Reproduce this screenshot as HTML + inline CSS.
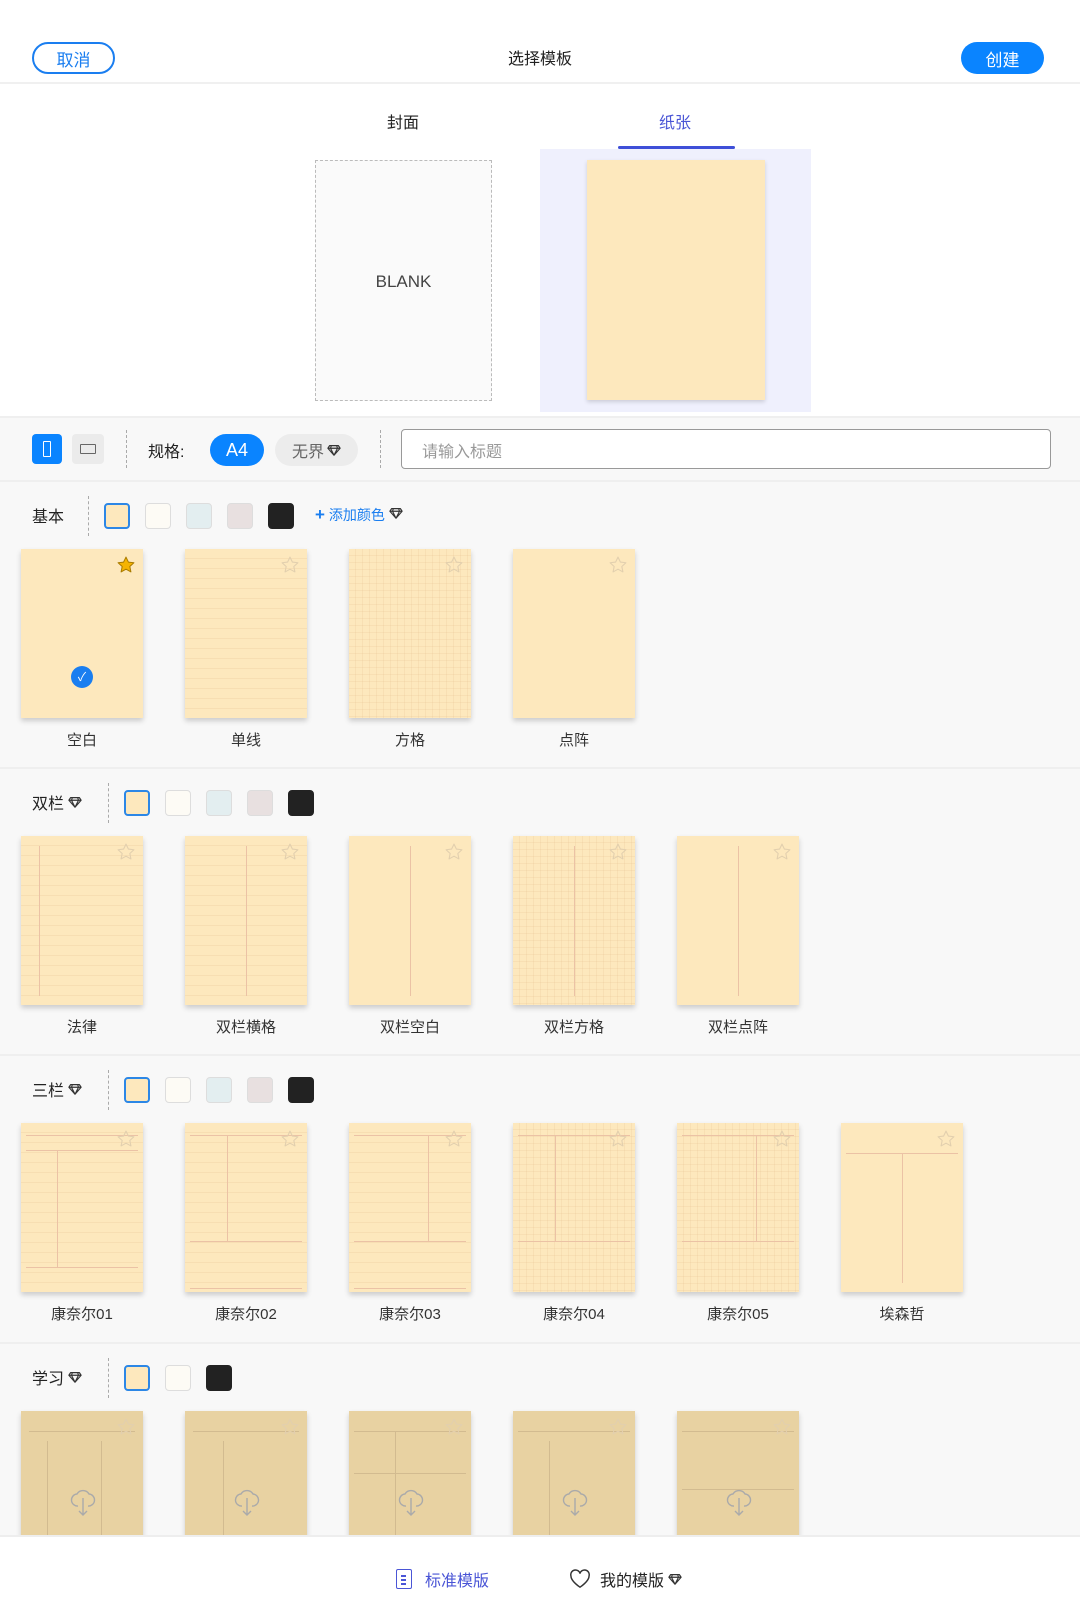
<!DOCTYPE html>
<html><head><meta charset="utf-8"><style>
*{margin:0;padding:0;box-sizing:border-box}
body{width:1080px;height:1620px;position:relative;overflow:hidden;background:#f8f8f8;font-family:"Liberation Sans","Noto Sans CJK SC",sans-serif;color:#222}
.a{position:absolute}
.top{left:0;top:0;width:1080px;height:416px;background:#fff}
.btn{height:32px;border-radius:16px;font-size:17px;display:flex;align-items:center;justify-content:center}
.tab{font-size:16px;top:109px}
.card{position:absolute;width:122px;height:169px;background:#fde8bd;box-shadow:0 3px 5px rgba(0,0,0,.18);overflow:hidden}
.star{position:absolute;right:7px;top:6px;width:20px;height:20px}
.lbl{position:absolute;width:122px;text-align:center;font-size:15px;color:#333}
.sec{position:absolute;left:32px;font-size:16px;color:#222}
.vd{position:absolute;width:0;border-left:1px dashed #aaa}
.sw{position:absolute;width:26px;height:26px;border-radius:4px;border:1px solid #ddd}
.hr{position:absolute;left:0;width:1080px;height:2px;background:#efefef}
.ln{background-image:repeating-linear-gradient(to bottom,transparent 0 9px,rgba(215,170,120,.16) 9px 10px)}
.gr{background-image:repeating-linear-gradient(to bottom,transparent 0 6px,rgba(215,170,120,.14) 6px 7px),repeating-linear-gradient(to right,transparent 0 6px,rgba(215,170,120,.14) 6px 7px)}
.vl{position:absolute;width:1px;background:#ebc2a5}
.hl{position:absolute;height:1px;background:#ebc2a5}
.st{background:#e8d2a2}
.st .vl,.st .hl{background:#d2bb90}
.cl{position:absolute;left:49px;top:73px;width:26px;height:34px}
</style></head><body>
<svg width="0" height="0" style="position:absolute"><defs><symbol id="s" viewBox="0 0 24 24"><path d="M12 2.5l2.9 6 6.6.8-4.9 4.5 1.3 6.5L12 17l-5.9 3.3 1.3-6.5L2.5 9.3l6.6-.8z" fill="none" stroke="#e2cfae" stroke-width="1.3" stroke-linejoin="round"/></symbol>
<symbol id="d" viewBox="0 0 16 16"><path d="M3 3h10l2 3-7 8-7-8z M1 6h14 M5 3l-1 3 4 8 4-8-1-3" fill="none" stroke="#333" stroke-width="1.3" stroke-linejoin="round"/></symbol>
<symbol id="c" viewBox="0 0 26 34"><path d="M8 22a6 6 0 0 1-1-12 7 7 0 0 1 12 0 6 6 0 0 1-1 12 M13 14v17 M9 27l4 4 4-4" fill="none" stroke="#aaa" stroke-width="1.4"/></symbol></defs></svg>

<div class="a top"></div>
<div class="a btn" style="left:32px;top:42px;width:83px;border:2px solid #1a7ef0;color:#1a7ef0">取消</div>
<div class="a" style="left:0;width:1080px;top:45px;text-align:center;font-size:16px">选择模板</div>
<div class="a btn" style="left:961px;top:42px;width:83px;background:#0a84ff;color:#fff">创建</div>
<div class="a" style="left:0;top:82px;width:1080px;height:2px;background:#f0f0f0"></div>

<div class="a tab" style="left:387px">封面</div>
<div class="a tab" style="left:659px;color:#4a55d6">纸张</div>
<div class="a" style="left:618px;top:146px;width:117px;height:3px;background:#3e4fd8;border-radius:2px"></div>

<div class="a" style="left:315px;top:160px;width:177px;height:241px;border:1px dashed #bbb;background:#fafafa"></div>
<div class="a" style="left:315px;top:272px;width:177px;text-align:center;font-size:17px;color:#444">BLANK</div>
<div class="a" style="left:540px;top:149px;width:271px;height:263px;background:#eff0fd"></div>
<div class="a" style="left:587px;top:160px;width:178px;height:240px;background:#fde8bd;box-shadow:0 2px 4px rgba(0,0,0,.15)"></div>

<div class="a" style="left:0;top:416px;width:1080px;height:66px;background:#f8f8f8;border-top:2px solid #efefef;border-bottom:2px solid #efefef"></div>
<div class="a" style="left:32px;top:434px;width:30px;height:30px;background:#0a84ff;border-radius:4px"><div class="a" style="left:11px;top:7px;width:8px;height:16px;border:1.5px solid #fff;border-radius:1px"></div></div>
<div class="a" style="left:72px;top:434px;width:32px;height:30px;background:#ebebeb;border-radius:4px"><div class="a" style="left:8px;top:10px;width:16px;height:10px;border:1.5px solid #666;border-radius:1px"></div></div>
<div class="vd" style="left:126px;top:430px;height:38px"></div>
<div class="a" style="left:148px;top:438px;font-size:16px">规格:</div>
<div class="a btn" style="left:210px;top:434px;width:54px;background:#0a84ff;color:#fff;font-size:18px">A4</div>
<div class="a btn" style="left:275px;top:434px;width:83px;background:#ececec;color:#666;font-size:16px">无界<svg width="14" height="14" style="margin-left:3px"><use href="#d"/></svg></div>
<div class="vd" style="left:380px;top:430px;height:38px"></div>
<div class="a" style="left:401px;top:429px;width:650px;height:40px;border:1.5px solid #999;border-radius:4px;background:#fff;font-size:16px;color:#999;padding:8px 20px">请输入标题</div>

<div class="sec" style="top:503px">基本</div>
<div class="vd" style="left:88px;top:496px;height:40px"></div>
<div class="sw" style="left:104px;top:503px;background:#fde8bd;border:2px solid #2c87e6"></div>
<div class="sw" style="left:145px;top:503px;background:#fdfbf5"></div>
<div class="sw" style="left:186px;top:503px;background:#e3eef0"></div>
<div class="sw" style="left:227px;top:503px;background:#e8e0e0"></div>
<div class="sw" style="left:268px;top:503px;background:#222;border-color:#222"></div>
<div class="a" style="left:315px;top:505px;font-size:14px;color:#1a7ef0"><b style="font-size:17px">+</b> 添加颜色 <svg width="14" height="14"><use href="#d"/></svg></div>

<div class="card" style="left:21px;top:549px"><svg class="star" viewBox="0 0 24 24"><path d="M12 2.5l2.9 6 6.6.8-4.9 4.5 1.3 6.5L12 17l-5.9 3.3 1.3-6.5L2.5 9.3l6.6-.8z" fill="#f5b301" stroke="#a87a00" stroke-width="1.2" stroke-linejoin="round"/></svg>
<div class="a" style="left:50px;top:117px;width:22px;height:22px;border-radius:50%;background:#1a7ef0;color:#fff;font-size:12px;text-align:center;line-height:22px">✓</div></div>
<div class="card ln" style="left:185px;top:549px"><svg class="star"><use href="#s"/></svg></div>
<div class="card gr" style="left:349px;top:549px"><svg class="star"><use href="#s"/></svg></div>
<div class="card" style="left:513px;top:549px"><svg class="star"><use href="#s"/></svg></div>
<div class="lbl" style="left:21px;top:729px">空白</div>
<div class="lbl" style="left:185px;top:729px">单线</div>
<div class="lbl" style="left:349px;top:729px">方格</div>
<div class="lbl" style="left:513px;top:729px">点阵</div>
<div class="hr" style="top:767px"></div>

<div class="sec" style="top:790px">双栏 <svg width="14" height="14"><use href="#d"/></svg></div>
<div class="vd" style="left:108px;top:783px;height:40px"></div>
<div class="sw" style="left:124px;top:790px;background:#fde8bd;border:2px solid #2c87e6"></div>
<div class="sw" style="left:165px;top:790px;background:#fdfbf5"></div>
<div class="sw" style="left:206px;top:790px;background:#e3eef0"></div>
<div class="sw" style="left:247px;top:790px;background:#e8e0e0"></div>
<div class="sw" style="left:288px;top:790px;background:#222;border-color:#222"></div>

<div class="card ln" style="left:21px;top:836px"><div class="vl" style="left:18px;top:10px;height:150px"></div><svg class="star"><use href="#s"/></svg></div>
<div class="card ln" style="left:185px;top:836px"><div class="vl" style="left:61px;top:10px;height:150px"></div><svg class="star"><use href="#s"/></svg></div>
<div class="card" style="left:349px;top:836px"><div class="vl" style="left:61px;top:10px;height:150px"></div><svg class="star"><use href="#s"/></svg></div>
<div class="card gr" style="left:513px;top:836px"><div class="vl" style="left:61px;top:10px;height:150px"></div><svg class="star"><use href="#s"/></svg></div>
<div class="card" style="left:677px;top:836px"><div class="vl" style="left:61px;top:10px;height:150px"></div><svg class="star"><use href="#s"/></svg></div>
<div class="lbl" style="left:21px;top:1016px">法律</div>
<div class="lbl" style="left:185px;top:1016px">双栏横格</div>
<div class="lbl" style="left:349px;top:1016px">双栏空白</div>
<div class="lbl" style="left:513px;top:1016px">双栏方格</div>
<div class="lbl" style="left:677px;top:1016px">双栏点阵</div>
<div class="hr" style="top:1054px"></div>

<div class="sec" style="top:1077px">三栏 <svg width="14" height="14"><use href="#d"/></svg></div>
<div class="vd" style="left:108px;top:1070px;height:40px"></div>
<div class="sw" style="left:124px;top:1077px;background:#fde8bd;border:2px solid #2c87e6"></div>
<div class="sw" style="left:165px;top:1077px;background:#fdfbf5"></div>
<div class="sw" style="left:206px;top:1077px;background:#e3eef0"></div>
<div class="sw" style="left:247px;top:1077px;background:#e8e0e0"></div>
<div class="sw" style="left:288px;top:1077px;background:#222;border-color:#222"></div>

<div class="card ln" style="left:21px;top:1123px"><div class="hl" style="left:5px;top:12px;width:112px"></div><div class="hl" style="left:5px;top:27px;width:112px"></div><div class="vl" style="left:36px;top:27px;height:117px"></div><div class="hl" style="left:5px;top:144px;width:112px"></div><svg class="star"><use href="#s"/></svg></div>
<div class="card ln" style="left:185px;top:1123px"><div class="hl" style="left:5px;top:12px;width:112px"></div><div class="vl" style="left:42px;top:12px;height:106px"></div><div class="hl" style="left:5px;top:118px;width:112px"></div><div class="hl" style="left:5px;top:165px;width:112px"></div><svg class="star"><use href="#s"/></svg></div>
<div class="card ln" style="left:349px;top:1123px"><div class="hl" style="left:5px;top:12px;width:112px"></div><div class="vl" style="left:79px;top:12px;height:106px"></div><div class="hl" style="left:5px;top:118px;width:112px"></div><div class="hl" style="left:5px;top:165px;width:112px"></div><svg class="star"><use href="#s"/></svg></div>
<div class="card gr" style="left:513px;top:1123px"><div class="hl" style="left:5px;top:12px;width:112px"></div><div class="vl" style="left:42px;top:12px;height:106px"></div><div class="hl" style="left:5px;top:118px;width:112px"></div><svg class="star"><use href="#s"/></svg></div>
<div class="card gr" style="left:677px;top:1123px"><div class="hl" style="left:5px;top:12px;width:112px"></div><div class="vl" style="left:79px;top:12px;height:106px"></div><div class="hl" style="left:5px;top:118px;width:112px"></div><svg class="star"><use href="#s"/></svg></div>
<div class="card" style="left:841px;top:1123px"><div class="hl" style="left:5px;top:30px;width:112px"></div><div class="vl" style="left:61px;top:30px;height:130px"></div><svg class="star"><use href="#s"/></svg></div>
<div class="lbl" style="left:21px;top:1303px">康奈尔01</div>
<div class="lbl" style="left:185px;top:1303px">康奈尔02</div>
<div class="lbl" style="left:349px;top:1303px">康奈尔03</div>
<div class="lbl" style="left:513px;top:1303px">康奈尔04</div>
<div class="lbl" style="left:677px;top:1303px">康奈尔05</div>
<div class="lbl" style="left:841px;top:1303px">埃森哲</div>
<div class="hr" style="top:1342px"></div>

<div class="sec" style="top:1365px">学习 <svg width="14" height="14"><use href="#d"/></svg></div>
<div class="vd" style="left:108px;top:1358px;height:40px"></div>
<div class="sw" style="left:124px;top:1365px;background:#fde8bd;border:2px solid #2c87e6"></div>
<div class="sw" style="left:165px;top:1365px;background:#fdfbf5"></div>
<div class="sw" style="left:206px;top:1365px;background:#222;border-color:#222"></div>

<div class="card st ln" style="left:21px;top:1411px"><div class="hl" style="left:8px;top:20px;width:106px"></div><div class="vl" style="left:26px;top:30px;height:140px"></div><div class="vl" style="left:80px;top:30px;height:140px"></div><svg class="cl"><use href="#c"/></svg><svg class="star"><use href="#s"/></svg></div>
<div class="card st ln" style="left:185px;top:1411px"><div class="hl" style="left:8px;top:20px;width:106px"></div><div class="vl" style="left:38px;top:30px;height:140px"></div><svg class="cl"><use href="#c"/></svg><svg class="star"><use href="#s"/></svg></div>
<div class="card st" style="left:349px;top:1411px"><div class="hl" style="left:5px;top:20px;width:112px"></div><div class="hl" style="left:5px;top:62px;width:112px"></div><div class="vl" style="left:46px;top:20px;height:150px"></div><svg class="cl"><use href="#c"/></svg><svg class="star"><use href="#s"/></svg></div>
<div class="card st" style="left:513px;top:1411px"><div class="hl" style="left:5px;top:20px;width:112px"></div><div class="vl" style="left:36px;top:30px;height:140px"></div><svg class="cl"><use href="#c"/></svg><svg class="star"><use href="#s"/></svg></div>
<div class="card st" style="left:677px;top:1411px"><div class="hl" style="left:5px;top:20px;width:112px"></div><div class="hl" style="left:5px;top:78px;width:112px"></div><svg class="cl"><use href="#c"/></svg><svg class="star"><use href="#s"/></svg></div>

<div class="a" style="left:0;top:1535px;width:1080px;height:85px;background:#fff;border-top:2px solid #eee"></div>
<div class="a" style="left:396px;top:1569px;width:16px;height:20px;border:1.5px solid #4a55d6;border-radius:2px"><div class="a" style="left:4px;top:5px;width:5px;height:1.5px;background:#4a55d6"></div><div class="a" style="left:4px;top:9px;width:5px;height:1.5px;background:#4a55d6"></div><div class="a" style="left:4px;top:13px;width:5px;height:1.5px;background:#4a55d6"></div></div>
<div class="a" style="left:425px;top:1567px;font-size:16px;color:#4a55d6">标准模版</div>
<svg class="a" style="left:569px;top:1569px" width="22" height="20" viewBox="0 0 24 22"><path d="M12 20S2 13.5 2 7.5A5 5 0 0 1 12 5a5 5 0 0 1 10 2.5C22 13.5 12 20 12 20z" fill="none" stroke="#333" stroke-width="1.6"/></svg>
<div class="a" style="left:600px;top:1567px;font-size:16px;color:#222">我的模版 <svg width="14" height="14"><use href="#d"/></svg></div>
</body></html>
